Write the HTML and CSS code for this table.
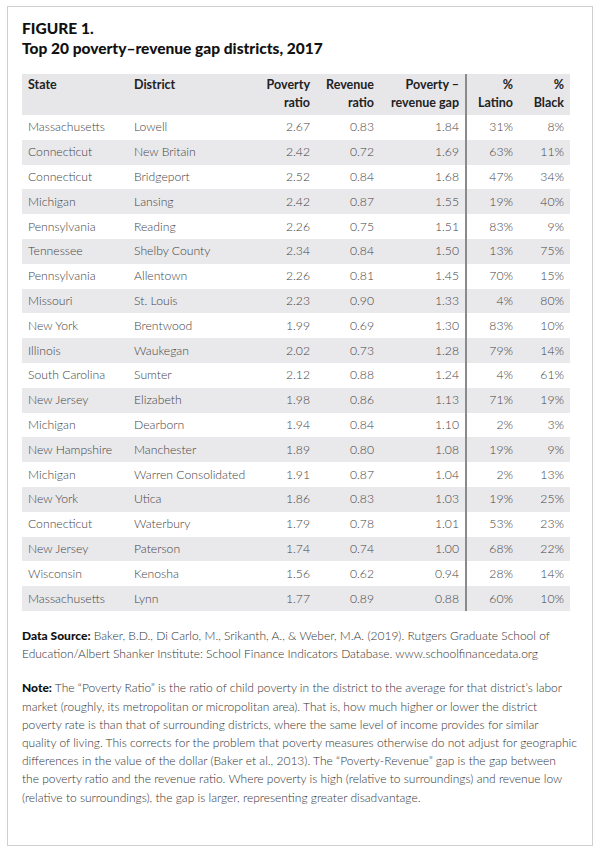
FILE: index.html
```html
<!DOCTYPE html>
<html lang="en">
<head>
<meta charset="utf-8">
<title>Figure 1</title>
<link rel="stylesheet" href="styles.css">
</head>
<body>
<div class="figure">
  <h1 class="title"><span class="fig-label">FIGURE 1.</span><span class="fig-caption">Top 20 poverty–revenue gap districts, 2017</span></h1>
  <table class="data">
    <colgroup>
      <col class="c-state"><col class="c-district"><col class="c-pov"><col class="c-rev"><col class="c-gap"><col class="c-lat"><col class="c-blk">
    </colgroup>
    <thead>
      <tr>
        <th class="left">State</th>
        <th class="left">District</th>
        <th>Poverty<br>ratio</th>
        <th>Revenue<br>ratio</th>
        <th>Poverty –<br>revenue gap</th>
        <th class="div">%<br>Latino</th>
        <th>%<br>Black</th>
      </tr>
    </thead>
    <tbody>
      <tr><td class="left">Massachusetts</td><td class="left">Lowell</td><td>2.67</td><td>0.83</td><td>1.84</td><td class="div">31%</td><td>8%</td></tr>
      <tr><td class="left">Connecticut</td><td class="left">New Britain</td><td>2.42</td><td>0.72</td><td>1.69</td><td class="div">63%</td><td>11%</td></tr>
      <tr><td class="left">Connecticut</td><td class="left">Bridgeport</td><td>2.52</td><td>0.84</td><td>1.68</td><td class="div">47%</td><td>34%</td></tr>
      <tr><td class="left">Michigan</td><td class="left">Lansing</td><td>2.42</td><td>0.87</td><td>1.55</td><td class="div">19%</td><td>40%</td></tr>
      <tr><td class="left">Pennsylvania</td><td class="left">Reading</td><td>2.26</td><td>0.75</td><td>1.51</td><td class="div">83%</td><td>9%</td></tr>
      <tr><td class="left">Tennessee</td><td class="left">Shelby County</td><td>2.34</td><td>0.84</td><td>1.50</td><td class="div">13%</td><td>75%</td></tr>
      <tr><td class="left">Pennsylvania</td><td class="left">Allentown</td><td>2.26</td><td>0.81</td><td>1.45</td><td class="div">70%</td><td>15%</td></tr>
      <tr><td class="left">Missouri</td><td class="left">St. Louis</td><td>2.23</td><td>0.90</td><td>1.33</td><td class="div">4%</td><td>80%</td></tr>
      <tr><td class="left">New York</td><td class="left">Brentwood</td><td>1.99</td><td>0.69</td><td>1.30</td><td class="div">83%</td><td>10%</td></tr>
      <tr><td class="left">Illinois</td><td class="left">Waukegan</td><td>2.02</td><td>0.73</td><td>1.28</td><td class="div">79%</td><td>14%</td></tr>
      <tr><td class="left">South Carolina</td><td class="left">Sumter</td><td>2.12</td><td>0.88</td><td>1.24</td><td class="div">4%</td><td>61%</td></tr>
      <tr><td class="left">New Jersey</td><td class="left">Elizabeth</td><td>1.98</td><td>0.86</td><td>1.13</td><td class="div">71%</td><td>19%</td></tr>
      <tr><td class="left">Michigan</td><td class="left">Dearborn</td><td>1.94</td><td>0.84</td><td>1.10</td><td class="div">2%</td><td>3%</td></tr>
      <tr><td class="left">New Hampshire</td><td class="left">Manchester</td><td>1.89</td><td>0.80</td><td>1.08</td><td class="div">19%</td><td>9%</td></tr>
      <tr><td class="left">Michigan</td><td class="left">Warren Consolidated</td><td>1.91</td><td>0.87</td><td>1.04</td><td class="div">2%</td><td>13%</td></tr>
      <tr><td class="left">New York</td><td class="left">Utica</td><td>1.86</td><td>0.83</td><td>1.03</td><td class="div">19%</td><td>25%</td></tr>
      <tr><td class="left">Connecticut</td><td class="left">Waterbury</td><td>1.79</td><td>0.78</td><td>1.01</td><td class="div">53%</td><td>23%</td></tr>
      <tr><td class="left">New Jersey</td><td class="left">Paterson</td><td>1.74</td><td>0.74</td><td>1.00</td><td class="div">68%</td><td>22%</td></tr>
      <tr><td class="left">Wisconsin</td><td class="left">Kenosha</td><td>1.56</td><td>0.62</td><td>0.94</td><td class="div">28%</td><td>14%</td></tr>
      <tr><td class="left">Massachusetts</td><td class="left">Lynn</td><td>1.77</td><td>0.89</td><td>0.88</td><td class="div">60%</td><td>10%</td></tr>
    </tbody>
  </table>
  <p class="note"><b>Data Source:</b> Baker, B.D., Di Carlo, M., Srikanth, A., &amp; Weber, M.A. (2019). Rutgers Graduate School of<br>Education/Albert Shanker Institute: School Finance Indicators Database. www.schoolfinancedata.org</p>
  <p class="note"><b>Note:</b> The “Poverty Ratio” is the ratio of child poverty in the district to the average for that district’s labor<br>market (roughly, its metropolitan or micropolitan area). That is, how much higher or lower the district<br>poverty rate is than that of surrounding districts, where the same level of income provides for similar<br>quality of living. This corrects for the problem that poverty measures otherwise do not adjust for geographic<br>differences in the value of the dollar (Baker et al., 2013). The “Poverty-Revenue” gap is the gap between<br>the poverty ratio and the revenue ratio. Where poverty is high (relative to surroundings) and revenue low<br>(relative to surroundings), the gap is larger, representing greater disadvantage.</p>
</div>
</body>
</html>
```
FILE: styles.css
```css
html, body {
  margin: 0;
  padding: 0;
  background: #ffffff;
}

body {
  font-family: Lato, "Open Sans", sans-serif;
  color: #3a3a3a;
}

.figure {
  box-sizing: border-box;
  margin: 6px 7px 0 7px;
  width: 586px;
  height: 840px;
  border: 1px solid #cfcfcf;
  padding: 11px 14px 0 14px;
}

.title {
  margin: 0;
  display: flex;
  flex-direction: column;
  font-size: 15.5px;
  line-height: 20px;
  font-weight: 900;
  color: #111;
}

.data {
  margin-top: 16px;
  width: 548px;
  border-collapse: collapse;
  table-layout: fixed;
  font-size: 12.2px;
}

.c-state { width: 106px; }
.c-district { width: 127px; }
.c-pov { width: 61px; }
.c-rev { width: 64px; }
.c-gap { width: 86px; }
.c-lat { width: 53px; }
.c-blk { width: 51px; }

.data th {
  background: #e7e6e9;
  font-weight: 700;
  font-size: 12.5px;
  color: #222;
  text-align: right;
  vertical-align: top;
  padding: 2px 6px 3px 6px;
  line-height: 18px;
}

.data td {
  text-align: right;
  padding: 0 6px;
  height: 24.8px;
  line-height: 14px;
  font-weight: 300;
  color: #444;
  white-space: nowrap;
}

.data tbody tr:nth-child(even) td {
  background: #e9e8eb;
}

.data .left {
  text-align: left;
}

.data .div {
  border-left: 2px solid #8a8a8a;
}

.note {
  margin: 16px 0 0 0;
  font-size: 12px;
  line-height: 18.2px;
  font-weight: 300;
  color: #333;
  white-space: nowrap;
}

.note + .note {
  margin-top: 16px;
}

.note b {
  font-weight: 900;
  color: #111;
}
```
